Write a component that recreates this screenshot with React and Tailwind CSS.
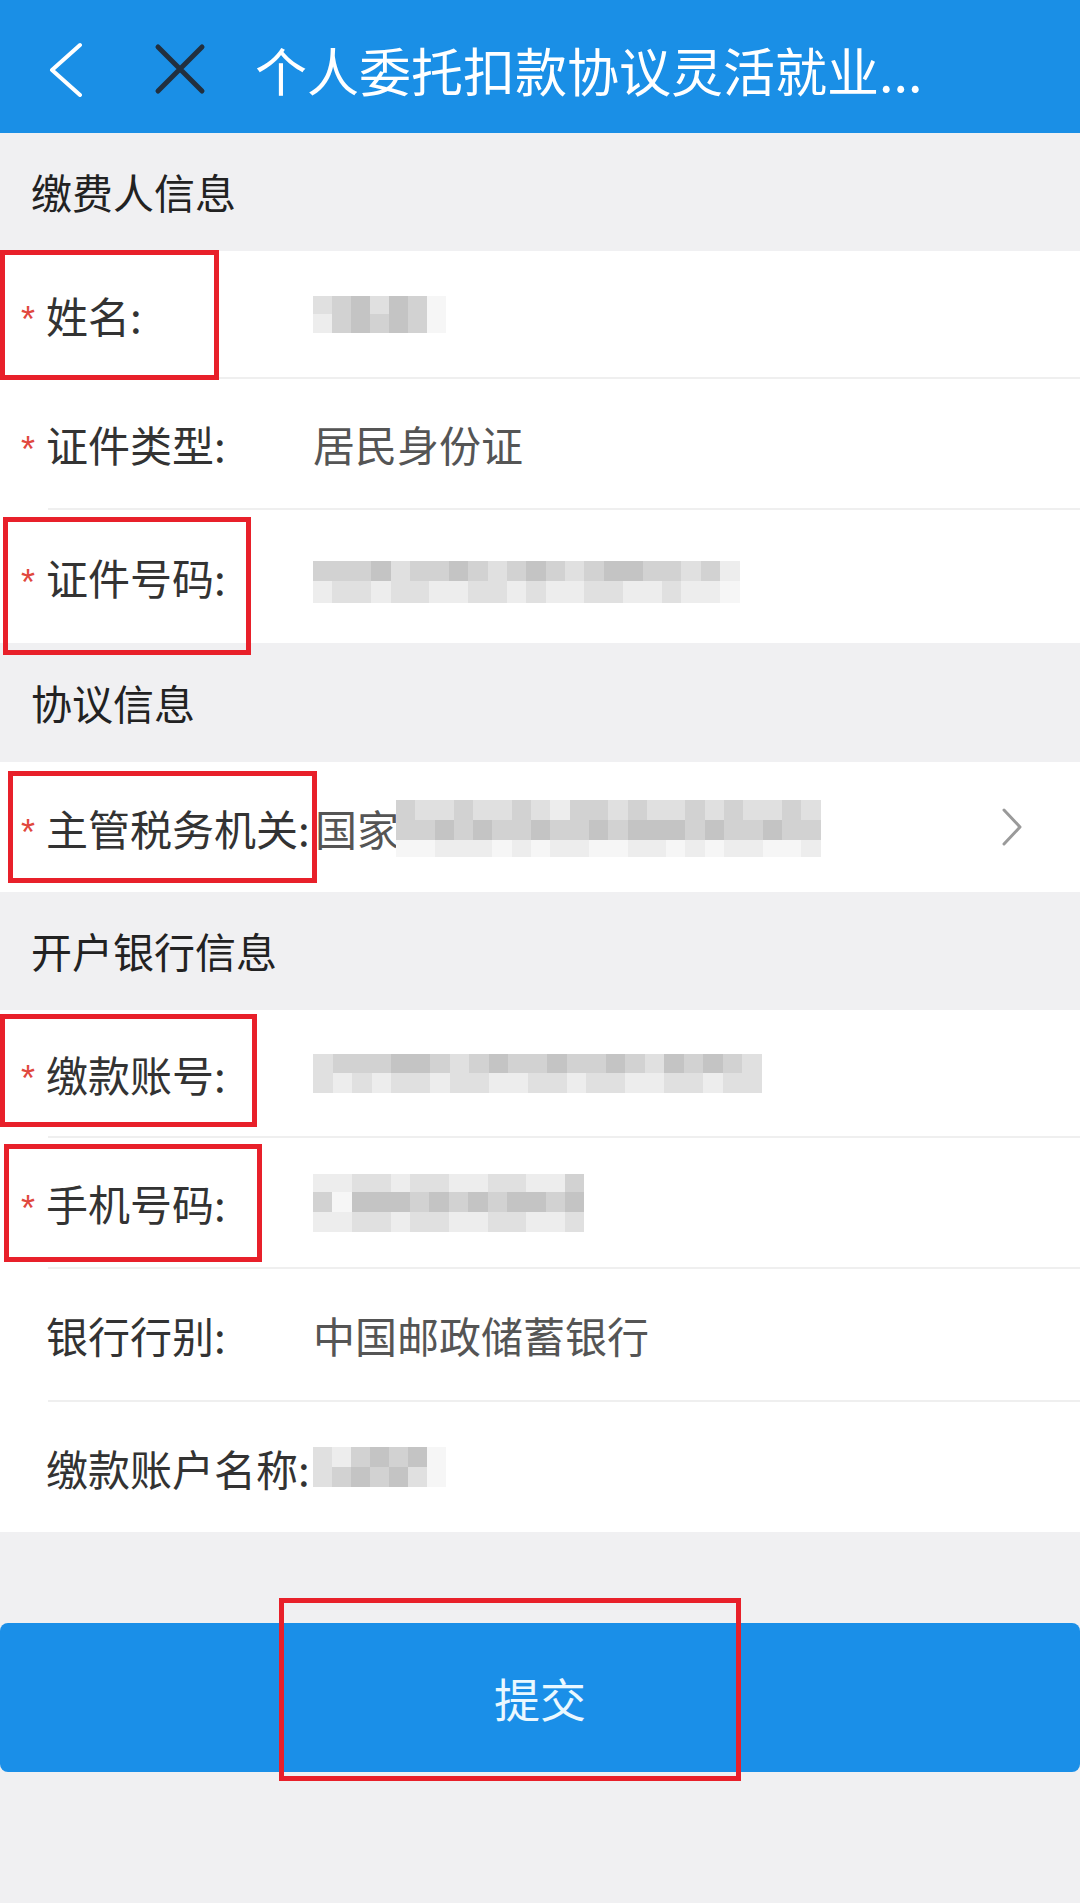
import { memo } from 'react';

// mosaic shades, full class names
const SHADE = {
  a: 'bg-[#ededed]',
  b: 'bg-[#e0e0e0]',
  c: 'bg-[#d2d2d2]',
  d: 'bg-[#c4c4c4]',
  e: 'bg-[#b2b2b2]',
  f: 'bg-[#f6f6f6]',
};

const Mosaic = memo(({ rows, cell }) => (
  <div className="flex flex-col blur-[0.7px]">
    {rows.map((row, i) => (
      <div key={i} className={`flex ${row.h}`}>
        {row.cells.split('').map((c, j) => (
          <div key={j} className={`${cell} h-full ${SHADE[c]}`} />
        ))}
      </div>
    ))}
  </div>
));

const RedBox = ({ className }) => (
  <div className={`absolute border-[5px] border-[#e8202a] pointer-events-none z-10 ${className}`} />
);

const Section = ({ title, h }) => (
  <div className={`flex items-center px-[31px] bg-[#f0f0f2] text-[41px] text-[#222] ${h}`}>{title}</div>
);

const Row = ({ label, required, h, sep = true, children, box, right }) => (
  <div className="relative bg-white">
    <div className={`flex items-center ${h}`}>
      <div className="flex items-center w-[313px] shrink-0">
        <span className="w-[46px] pl-[21px] h-[36px] translate-y-[6px] text-[36px] leading-none text-[#e0483e] font-['Liberation_Sans',sans-serif]">
          {required ? '*' : ''}
        </span>
        <span className="text-[42px] text-[#333] whitespace-nowrap">{label}</span>
      </div>
      <div className="flex-1 flex items-center text-[42px] text-[#555] whitespace-nowrap">{children}</div>
      {right}
    </div>
    {sep && <div className="h-[2px] ml-[48px] bg-[#efefef]" />}
    {box && <RedBox className={box} />}
  </div>
);

const Chevron = () => (
  <svg width="24" height="40" viewBox="0 0 24 40" className="mr-[56px] shrink-0">
    <path d="M4 3 L20 20 L4 37" fill="none" stroke="#9a9a9a" strokeWidth="3" strokeLinecap="round" strokeLinejoin="round" />
  </svg>
);

export default function App() {
  return (
    <div className="w-[1080px] min-h-[1903px] bg-[#f0f0f2] font-['Noto_Sans_CJK_SC','Noto_Sans',sans-serif]">
      {/* top bar */}
      <div className="flex items-center h-[133px] bg-[#1a8fe6]">
        <svg width="40" height="60" viewBox="0 0 40 60" className="ml-[48px] shrink-0">
          <path d="M32 8 L4 33 L32 58" fill="none" stroke="#ffffff" strokeWidth="4" strokeLinecap="round" strokeLinejoin="round" />
        </svg>
        <svg width="56" height="56" viewBox="0 0 56 56" className="ml-[64px] shrink-0">
          <path d="M6 8 L50 52 M50 8 L6 52" fill="none" stroke="#22303f" strokeWidth="5" strokeLinecap="round" />
        </svg>
        <div className="ml-[47px] mt-[6px] text-[52px] text-white whitespace-nowrap">个人委托扣款协议灵活就业...</div>
      </div>

      <Section title="缴费人信息" h="h-[118px]" />
      <Row label="姓名:" required h="h-[126px]" box="left-0 -top-[1px] w-[219px] h-[130px]">
        <Mosaic
          cell="w-[19px]"
          rows={[
            { h: 'h-[18px]', cells: 'bcdbdcf' },
            { h: 'h-[19px]', cells: 'acdcdcf' },
          ]}
        />
      </Row>
      <Row label="证件类型:" required h="h-[129px]">
        居民身份证
      </Row>
      <Row label="证件号码:" required h="h-[133px]" sep={false} box="left-[3px] top-[7px] w-[248px] h-[138px]">
        <div className="mt-[10px]">
          <Mosaic
            cell="w-[19.4px]"
            rows={[
              { h: 'h-[20px]', cells: 'cccdbccdcbcdcbcddccbca' },
              { h: 'h-[22px]', cells: 'abbabbaabbabaabbaabaaf' },
            ]}
          />
        </div>
      </Row>

      <Section title="协议信息" h="h-[119px]" />
      <Row label="主管税务机关:" required h="h-[130px]" sep={false} box="left-[8px] top-[9px] w-[309px] h-[112px]" right={<Chevron />}>
        <span className="ml-[2px]">国家税务总局</span>
        <div className="absolute left-[396px] top-[38px]">
          <Mosaic
            cell="w-[19.3px]"
            rows={[
              { h: 'h-[20px]', cells: 'cbbcbbcbaccbcbbcbcbbcb' },
              { h: 'h-[20px]', cells: 'ccdcdccdccdcdddcdccdcc' },
              { h: 'h-[17px]', cells: 'ffaaafafaaffaafafaaffa' },
            ]}
          />
        </div>
      </Row>

      <Section title="开户银行信息" h="h-[118px]" />
      <Row label="缴款账号:" required h="h-[126px]" box="left-0 top-[4px] w-[257px] h-[113px]">
        <Mosaic
          cell="w-[19.5px]"
          rows={[
            { h: 'h-[19px]', cells: 'bcccddcbcdccdccdcbdcdcb' },
            { h: 'h-[20px]', cells: 'bababbabbaabbabbaabbabb' },
          ]}
        />
      </Row>
      <Row label="手机号码:" required h="h-[129px]" box="left-[4px] top-[6px] w-[258px] h-[118px]">
        <Mosaic
          cell="w-[19.4px]"
          rows={[
            { h: 'h-[18px]', cells: 'aabbabbaabbaac' },
            { h: 'h-[20px]', cells: 'cfdddcdcdcddcd' },
            { h: 'h-[20px]', cells: 'aabbabbaabbaab' },
          ]}
        />
      </Row>
      <Row label="银行行别:" h="h-[131px]">
        中国邮政储蓄银行
      </Row>
      <Row label="缴款账户名称:" h="h-[130px]" sep={false}>
        <Mosaic
          cell="w-[19px]"
          rows={[
            { h: 'h-[20px]', cells: 'bacdcdf' },
            { h: 'h-[20px]', cells: 'bcdcdbf' },
          ]}
        />
      </Row>

      {/* submit */}
      <div className="relative mt-[91px]">
        <button className="w-full h-[149px] rounded-[8px] bg-[#1a8fe8] text-[46px] text-[#eaf8ff]">提交</button>
        <RedBox className="left-[279px] -top-[25px] w-[462px] h-[183px]" />
      </div>
      <div className="h-[131px]" />
    </div>
  );
}
